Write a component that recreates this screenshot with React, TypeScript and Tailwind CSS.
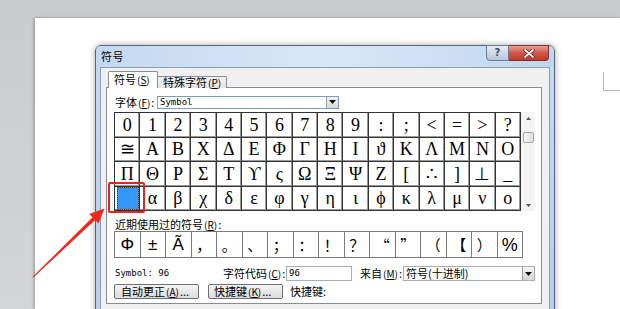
import React from "react";

const row1 = ["0", "1", "2", "3", "4", "5", "6", "7", "8", "9", ":", ";", "<", "=", ">", "?"];
const row2 = ["≅", "Α", "Β", "Χ", "Δ", "Ε", "Φ", "Γ", "Η", "Ι", "ϑ", "Κ", "Λ", "Μ", "Ν", "Ο"];
const row3 = ["Π", "Θ", "Ρ", "Σ", "Τ", "ϒ", "ς", "Ω", "Ξ", "Ψ", "Ζ", "[", "∴", "]", "⊥", "_"];
const row4 = ["", "α", "β", "χ", "δ", "ε", "φ", "γ", "η", "ι", "ϕ", "κ", "λ", "μ", "ν", "ο"];
const recent = ["Φ", "±", "Ã", "，", "。", "、", "；", "：", "！", "？", "“", "”", "（", "【", "）", "%"];

function Mn({ k }: { k: string }) {
  return (
    <span className="text-[10px] mx-[1px]">
      (<span className="underline">{k}</span>)
    </span>
  );
}

function DropArrow({ className }: { className: string }) {
  return (
    <div className={className}>
      <svg width="7" height="4" viewBox="0 0 7 4">
        <polygon points="0,0 7,0 3.5,4" fill="#111" />
      </svg>
    </div>
  );
}

export default function App() {
  const rows = [row1, row2, row3, row4];
  return (
    <div className="relative w-[620px] h-[309px] overflow-hidden bg-gradient-to-b from-[#c9cbcf] to-[#d3d5d8] font-['Noto_Sans_CJK_SC',sans-serif] text-black">
      <div className="flex h-full pt-[18px] pl-[35px]">
        <div className="relative flex-1 bg-white shadow-[-1px_0_3px_rgba(0,0,0,0.3)] pl-[60px] pt-[27px]">
          {/* crop mark */}
          <div className="absolute left-[568px] top-[54px] w-[30px] h-[19px] border-l border-b border-[#b8b8b8]" />

          {/* dialog */}
          <div className="w-[460px] h-[300px] rounded-t-[6px] border border-[#59667a] bg-gradient-to-b from-[#c6dcf3] via-[#bdd3ee] to-[#b6cde9] px-[4px] flex flex-col shadow-[0_0_6px_rgba(0,0,0,0.35)]">
            {/* title bar */}
            <div className="h-[21px] flex items-start justify-between bg-gradient-to-r from-[#c3d8f1] via-[#d9e8f8] to-[#c0d6f0] -mx-[4px] px-[4px] rounded-t-[5px]">
              <span className="text-[11px] leading-[12px] pt-[4px] pl-[1px] tracking-[0.5px]">符号</span>
              <div className="flex -mt-[1px] mr-[1px]">
                <div className="w-[23px] h-[16px] rounded-bl-[4px] border border-[#6b7c91] bg-gradient-to-b from-[#e6edf5] via-[#ccd8e6] to-[#b7c7d9] flex items-center justify-center">
                  <span className="text-[10px] leading-[10px] font-bold text-[#3c4a5c] font-['DejaVu_Sans',sans-serif]">?</span>
                </div>
                <div className="w-[40px] h-[16px] rounded-br-[4px] border border-l-0 border-[#7a3026] bg-gradient-to-b from-[#e6a195] via-[#d0574a] to-[#c1392b] flex items-center justify-center">
                  <svg width="12" height="9" viewBox="0 0 12 9">
                    <path d="M2 1 L10 8 M10 1 L2 8" stroke="#5a1a14" strokeWidth="3.2" strokeLinecap="round" />
                    <path d="M2 1 L10 8 M10 1 L2 8" stroke="#ffffff" strokeWidth="1.8" strokeLinecap="round" />
                  </svg>
                </div>
              </div>
            </div>

            {/* client */}
            <div className="flex-1 bg-[#f0f0f0] border border-[#8c9db3] pt-[4px] pl-[5px] pr-[7px]">
              {/* tabs */}
              <div className="flex items-end pl-[2px] h-[16px]">
                <div className="relative z-10 h-[17px] w-[50px] border border-b-0 border-[#898c95] bg-white rounded-t-[2px] text-[11px] leading-[15px] pl-[5px] whitespace-nowrap">
                  符号<Mn k="S" />
                </div>
                <div className="h-[12px] w-[70px] -ml-px border border-b-0 border-[#898c95] bg-gradient-to-b from-[#f3f3f3] to-[#e3e3e3] rounded-t-[2px] text-[11px] leading-[11px] pl-[5px] whitespace-nowrap">
                  特殊字符<Mn k="P" />
                </div>
              </div>
              {/* panel */}
              <div className="-mt-px h-[217px] border border-[#898c95] bg-white pl-[7px] pt-[8px]">
                {/* font row */}
                <div className="flex items-center h-[12px]">
                  <span className="w-[43px] pl-[1px] text-[11px] leading-[12px] whitespace-nowrap">
                    字体<Mn k="F" />:
                  </span>
                  <div className="relative w-[182px] h-[13px] border border-[#7f9db9] bg-white flex items-center">
                    <span className="pl-[2px] text-[9px] leading-[10px] font-['DejaVu_Sans_Mono',monospace]">Symbol</span>
                    <DropArrow className="absolute right-0 top-0 w-[12px] h-[11px] bg-gradient-to-b from-[#f4f4f4] to-[#d8d8d8] border-l border-[#9a9a9a] flex items-center justify-center" />
                  </div>
                </div>

                {/* symbol grid */}
                <div className="relative flex mt-[4px]">
                  <div className="w-[407px] grid grid-cols-[repeat(16,minmax(0,1fr))] border-l border-t border-[#333]">
                    {rows.map((r, ri) =>
                      r.map((c, ci) => {
                        const sel = ri === 3 && ci === 0;
                        return (
                          <div
                            key={`${ri}-${ci}`}
                            className="h-[24.5px] border-r border-b border-[#333] shadow-[inset_-1px_-1px_0_#9a9a9a] flex items-center justify-center text-[18px] leading-none font-['Liberation_Serif',serif]"
                          >
                            {sel ? (
                              <div className="w-[25px] h-[23px] ml-[2px] bg-[#3597fb] outline outline-1 outline-dotted outline-[#5a3a14] -outline-offset-1" />
                            ) : (
                              c
                            )}
                          </div>
                        );
                      })
                    )}
                  </div>
                  {/* scrollbar */}
                  <div className="w-[14px] h-[99px] bg-[#f4f4f4] flex flex-col items-center">
                    <div className="h-[12px] flex items-center justify-center">
                      <svg width="5" height="3" viewBox="0 0 5 3">
                        <polygon points="0,3 5,3 2.5,0" fill="#555" />
                      </svg>
                    </div>
                    <div className="mt-[8px] w-[11px] h-[11px] border border-[#a8a8a8] rounded-[2px] bg-gradient-to-r from-[#f6f6f6] to-[#e0e0e0]" />
                    <div className="flex-1" />
                    <div className="h-[12px] flex items-center justify-center">
                      <svg width="5" height="3" viewBox="0 0 5 3">
                        <polygon points="0,0 5,0 2.5,3" fill="#555" />
                      </svg>
                    </div>
                  </div>
                  {/* red annotation box */}
                  <div className="absolute left-[-6px] top-[70px] w-[37px] h-[31px] border-2 border-[#e8211b] rounded-[2px]" />
                </div>

                {/* recent */}
                <div className="mt-[7px] h-[12px] text-[11px] leading-[12px] pl-[1px] whitespace-nowrap">
                  近期使用过的符号<Mn k="R" />:
                </div>
                <div className="mt-[1px] w-[409px] grid grid-cols-[repeat(16,minmax(0,1fr))] border-l border-t border-[#7a7a7a]">
                  {recent.map((c, i) => (
                    <div
                      key={i}
                      className={
                        "h-[26px] border-r border-b border-[#7a7a7a] flex items-center justify-center leading-none " +
                        (i < 3
                          ? "text-[17px] font-['Liberation_Sans',sans-serif]"
                          : i === 15
                          ? "text-[18px] font-['Liberation_Sans',sans-serif]"
                          : "text-[15px] font-['Noto_Sans_CJK_SC',sans-serif]")
                      }
                    >
                      {c}
                    </div>
                  ))}
                </div>

                {/* info row */}
                <div className="mt-[8px] h-[15px] flex items-center">
                  <span className="w-[109px] text-[9px] font-['DejaVu_Sans_Mono',monospace] pl-[1px]">Symbol: 96</span>
                  <span className="w-[63px] text-[11px] whitespace-nowrap">
                    字符代码<Mn k="C" />:
                  </span>
                  <div className="w-[66px] h-[15px] border border-[#abadb3] bg-white flex items-center pl-[2px] text-[9px] font-['DejaVu_Sans_Mono',monospace]">
                    96
                  </div>
                  <span className="ml-[8px] w-[43px] text-[11px] whitespace-nowrap">
                    来自<Mn k="M" />:
                  </span>
                  <div className="relative w-[132px] h-[15px] border border-[#abadb3] bg-white flex items-center pl-[2px] text-[11px] whitespace-nowrap">
                    符号(十进制)
                    <DropArrow className="absolute right-0 top-0 w-[12px] h-[13px] bg-gradient-to-b from-[#f4f4f4] to-[#d6d6d6] border-l border-[#9a9a9a] flex items-center justify-center" />
                  </div>
                </div>

                {/* buttons */}
                <div className="mt-[3px] h-[15px] flex items-center">
                  <div className="w-[85px] h-[15px] border border-[#707070] rounded-[2px] bg-gradient-to-b from-[#f4f4f4] to-[#dcdcdc] text-[11px] leading-[13px] pl-[6px] whitespace-nowrap">
                    自动更正<Mn k="A" />...
                  </div>
                  <div className="ml-[9px] w-[75px] h-[15px] border border-[#707070] rounded-[2px] bg-gradient-to-b from-[#f4f4f4] to-[#dcdcdc] text-[11px] leading-[13px] pl-[5px] whitespace-nowrap">
                    快捷键<Mn k="K" />...
                  </div>
                  <span className="ml-[7px] text-[11px] whitespace-nowrap">快捷键:</span>
                </div>
              </div>
            </div>
          </div>
        </div>
      </div>

      {/* red arrow */}
      <svg className="absolute inset-0 pointer-events-none" width="620" height="309" viewBox="0 0 620 309">
        <polygon
          points="32.6,276.8 92.6,217.3 89.2,213.9 104.5,208.5 98.5,223.5 95.2,220.0 33.4,277.6"
          fill="#ee2a1e"
        />
      </svg>
    </div>
  );
}
